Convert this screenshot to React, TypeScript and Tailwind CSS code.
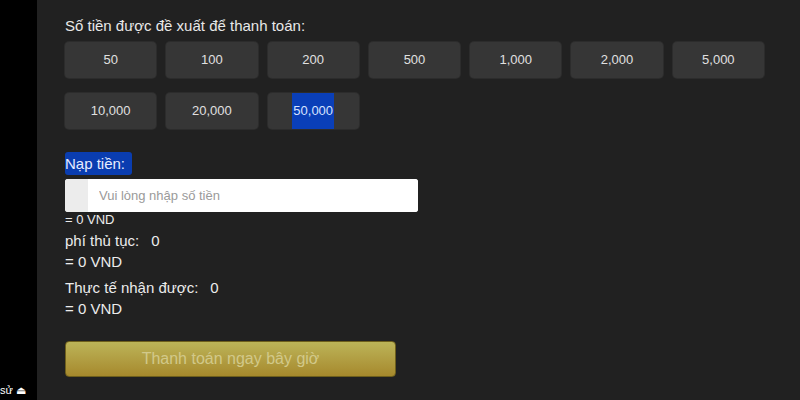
import React from 'react';

const amounts = ['50', '100', '200', '500', '1,000', '2,000', '5,000', '10,000', '20,000', '50,000'];

const App = () => {
  return (
    <div className="flex h-[400px] w-[800px] overflow-hidden bg-black font-['Liberation_Sans',Arial,sans-serif]">
      <aside className="relative w-[37px] shrink-0 bg-black">
        <span className="absolute bottom-[4px] right-[11px] whitespace-nowrap text-[11px] leading-[12px] text-white">sử ⏏</span>
      </aside>

      <main className="flex-1 bg-[#212121] pl-[28px] pt-[17px] text-[#e8e8e8]">
        <p className="text-[15px] leading-[18px]">Số tiền được đề xuất để thanh toán:</p>

        <div className="mt-[7px] grid w-[699px] grid-cols-7 gap-x-[10px] gap-y-[15px]">
          {amounts.map((a) => (
            <button
              key={a}
              className="flex h-[36px] items-center justify-center rounded-[4px] bg-[#363636] text-[13px] text-[#e0e0e0] shadow-[0_0_0_1px_#2c2c2c]"
            >
              {a === '50,000' ? (
                <span className="flex h-full items-center bg-[#0a3fb8] px-[1px] text-[#d8e4ff]">{a}</span>
              ) : (
                a
              )}
            </button>
          ))}
        </div>

        <div className="mt-[23px]">
          <span className="inline-block rounded-[3px] bg-[#0a3db0] pr-[7px] text-[15px] leading-[23px] text-[#e6ecff]">
            Nạp tiền:
          </span>
        </div>

        <div className="mt-[3px] flex h-[33px] w-[353px] overflow-hidden rounded-[3px] bg-white">
          <div className="w-[23px] bg-[#ececec]" />
          <input
            className="flex-1 bg-white pl-[11px] text-[13px] text-[#333] outline-none placeholder:text-[#9a9a9a]"
            placeholder="Vui lòng nhập số tiền"
          />
        </div>

        <div className="text-[#ececec]">
          <p className="text-[13px] leading-[16px]">= 0 VND</p>
          <p className="mt-[3px] text-[15px] leading-[19px]">
            phí thủ tục:<span className="ml-[12px]">0</span>
          </p>
          <p className="mt-[2px] text-[15px] leading-[19px]">= 0 VND</p>
          <p className="mt-[7px] text-[15px] leading-[19px]">
            Thực tế nhận được:<span className="ml-[12px]">0</span>
          </p>
          <p className="mt-[2px] text-[15px] leading-[19px]">= 0 VND</p>
        </div>

        <button className="mt-[23px] flex h-[36px] w-[331px] items-center justify-center rounded-[4px] border border-[#6e5f1c] bg-gradient-to-b from-[#bcb458] to-[#a6892c] text-[16px] text-[#d2c98a]">
          Thanh toán ngay bây giờ
        </button>
      </main>
    </div>
  );
};

export default App;
